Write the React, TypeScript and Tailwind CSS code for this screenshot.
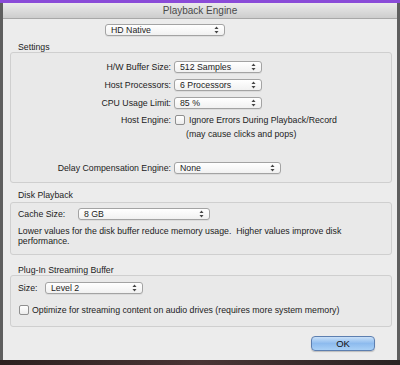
import React from "react";

const font = { fontFamily: '"Liberation Sans", Arial, sans-serif' };

function Arrows() {
  return (
    <svg width="5" height="8" viewBox="0 0 5 8" className="shrink-0">
      <path d="M2.5 0.5 L4.5 3 L0.5 3 Z" fill="#444" />
      <path d="M2.5 7.5 L4.5 5 L0.5 5 Z" fill="#444" />
    </svg>
  );
}

function Popup({ label, w }: { label: string; w: string }) {
  return (
    <div
      className={`${w} h-[12px] shrink-0 flex items-center justify-between pl-[5px] pr-[5px] rounded-[3px] border border-[#a3a3a3] bg-gradient-to-b from-[#ffffff] to-[#f1f1f1] shadow-[0_1px_0_rgba(0,0,0,0.06)] text-[8.75px] leading-none text-[#1c1c1c]`}
    >
      <span>{label}</span>
      <Arrows />
    </div>
  );
}

function Check() {
  return (
    <div className="w-[10px] h-[10px] shrink-0 rounded-[2px] border border-[#8f8f8f] bg-gradient-to-b from-[#ffffff] to-[#ececec]" />
  );
}

function Row({ label, children }: { label: string; children: React.ReactNode }) {
  return (
    <div className="flex items-center h-[12px]">
      <div className="w-[163px] text-right pr-[3px] text-[8.75px] leading-none text-[#1c1c1c] whitespace-nowrap">
        {label}
      </div>
      {children}
    </div>
  );
}

export default function App() {
  return (
    <div className="w-[400px] h-[365px] overflow-hidden flex flex-col bg-[#2e2222]" style={font}>
      <div className="h-[3px] bg-[#8a4bd8] shrink-0" />
      <div className="flex h-[357px] shrink-0">
        <div className="w-[3px] bg-[#5e5e5e]" />
        <div className="w-[394px] flex flex-col bg-[#ececec]">
          {/* title bar */}
          <div className="h-[16px] shrink-0 flex items-center justify-center bg-gradient-to-b from-[#ebebeb] to-[#cdcdcd] border-b border-[#a8a8a8] text-[10px] text-[#4a4a4a]">
            Playback Engine
          </div>
          <div className="flex flex-col text-[#1c1c1c] text-[8.75px] leading-none">
            <div className="mt-[5px] ml-[102px]">
              <Popup label="HD Native" w="w-[120px]" />
            </div>
            <div className="mt-[7px] ml-[15px] h-[9px] flex items-center">Settings</div>
            <div className="ml-[7px] w-[382px] h-[131px] rounded-[3px] border border-[#cfcfcf] bg-[#e9e9e9] flex flex-col pt-[8px]">
              <div className="flex flex-col gap-[6px]">
                <Row label="H/W Buffer Size:">
                  <Popup label="512 Samples" w="w-[88px]" />
                </Row>
                <Row label="Host Processors:">
                  <Popup label="6 Processors" w="w-[88px]" />
                </Row>
                <Row label="CPU Usage Limit:">
                  <Popup label="85 %" w="w-[88px]" />
                </Row>
              </div>
              <div className="mt-[5px]">
                <Row label="Host Engine:">
                  <div className="flex items-center gap-[4px] ml-[1px]">
                    <Check />
                    <span className="whitespace-nowrap">Ignore Errors During Playback/Record</span>
                  </div>
                </Row>
              </div>
              <div className="mt-[3px] ml-[175px] h-[10px] flex items-center">(may cause clicks and pops)</div>
              <div className="mt-[23px]">
                <Row label="Delay Compensation Engine:">
                  <Popup label="None" w="w-[107px]" />
                </Row>
              </div>
            </div>
            <div className="mt-[7px] ml-[15px] h-[10px] flex items-center">Disk Playback</div>
            <div className="mt-[2px] ml-[7px] w-[382px] h-[53px] rounded-[3px] border border-[#cfcfcf] bg-[#e9e9e9] flex flex-col pt-[5px] pl-[7px]">
              <div className="flex items-center h-[12px]">
                <div className="w-[60px]">Cache Size:</div>
                <Popup label="8 GB" w="w-[132px]" />
              </div>
              <div className="mt-[7px] leading-[9.5px]">
                Lower values for the disk buffer reduce memory usage.&nbsp; Higher values improve disk
                <br />
                performance.
              </div>
            </div>
            <div className="mt-[10px] ml-[15px] h-[10px] flex items-center">Plug-In Streaming Buffer</div>
            <div className="ml-[7px] w-[382px] h-[52px] rounded-[3px] border border-[#cfcfcf] bg-[#e9e9e9] flex flex-col pt-[6px] pl-[7px]">
              <div className="flex items-center h-[12px]">
                <div className="w-[27px]">Size:</div>
                <Popup label="Level 2" w="w-[98px]" />
              </div>
              <div className="mt-[11px] flex items-center gap-[3px] ml-[1px]">
                <Check />
                <span className="whitespace-nowrap">
                  Optimize for streaming content on audio drives (requires more system memory)
                </span>
              </div>
            </div>
            <div className="mt-[9px] flex justify-end pr-[22px]">
              <div className="w-[64px] h-[15px] rounded-[4px] border border-[#5d7fb0] bg-gradient-to-b from-[#c9e0f8] via-[#8dbbee] to-[#a9d0f6] flex items-center justify-center text-[9.5px] text-[#111] shadow-[0_1px_1px_rgba(0,0,0,0.2)]">
                OK
              </div>
            </div>
          </div>
        </div>
        <div className="w-[3px] bg-[#5e5e5e]" />
      </div>
      <div className="flex-1 bg-gradient-to-r from-[#2d1f1f] via-[#4a3535] to-[#2a2222]" />
    </div>
  );
}
